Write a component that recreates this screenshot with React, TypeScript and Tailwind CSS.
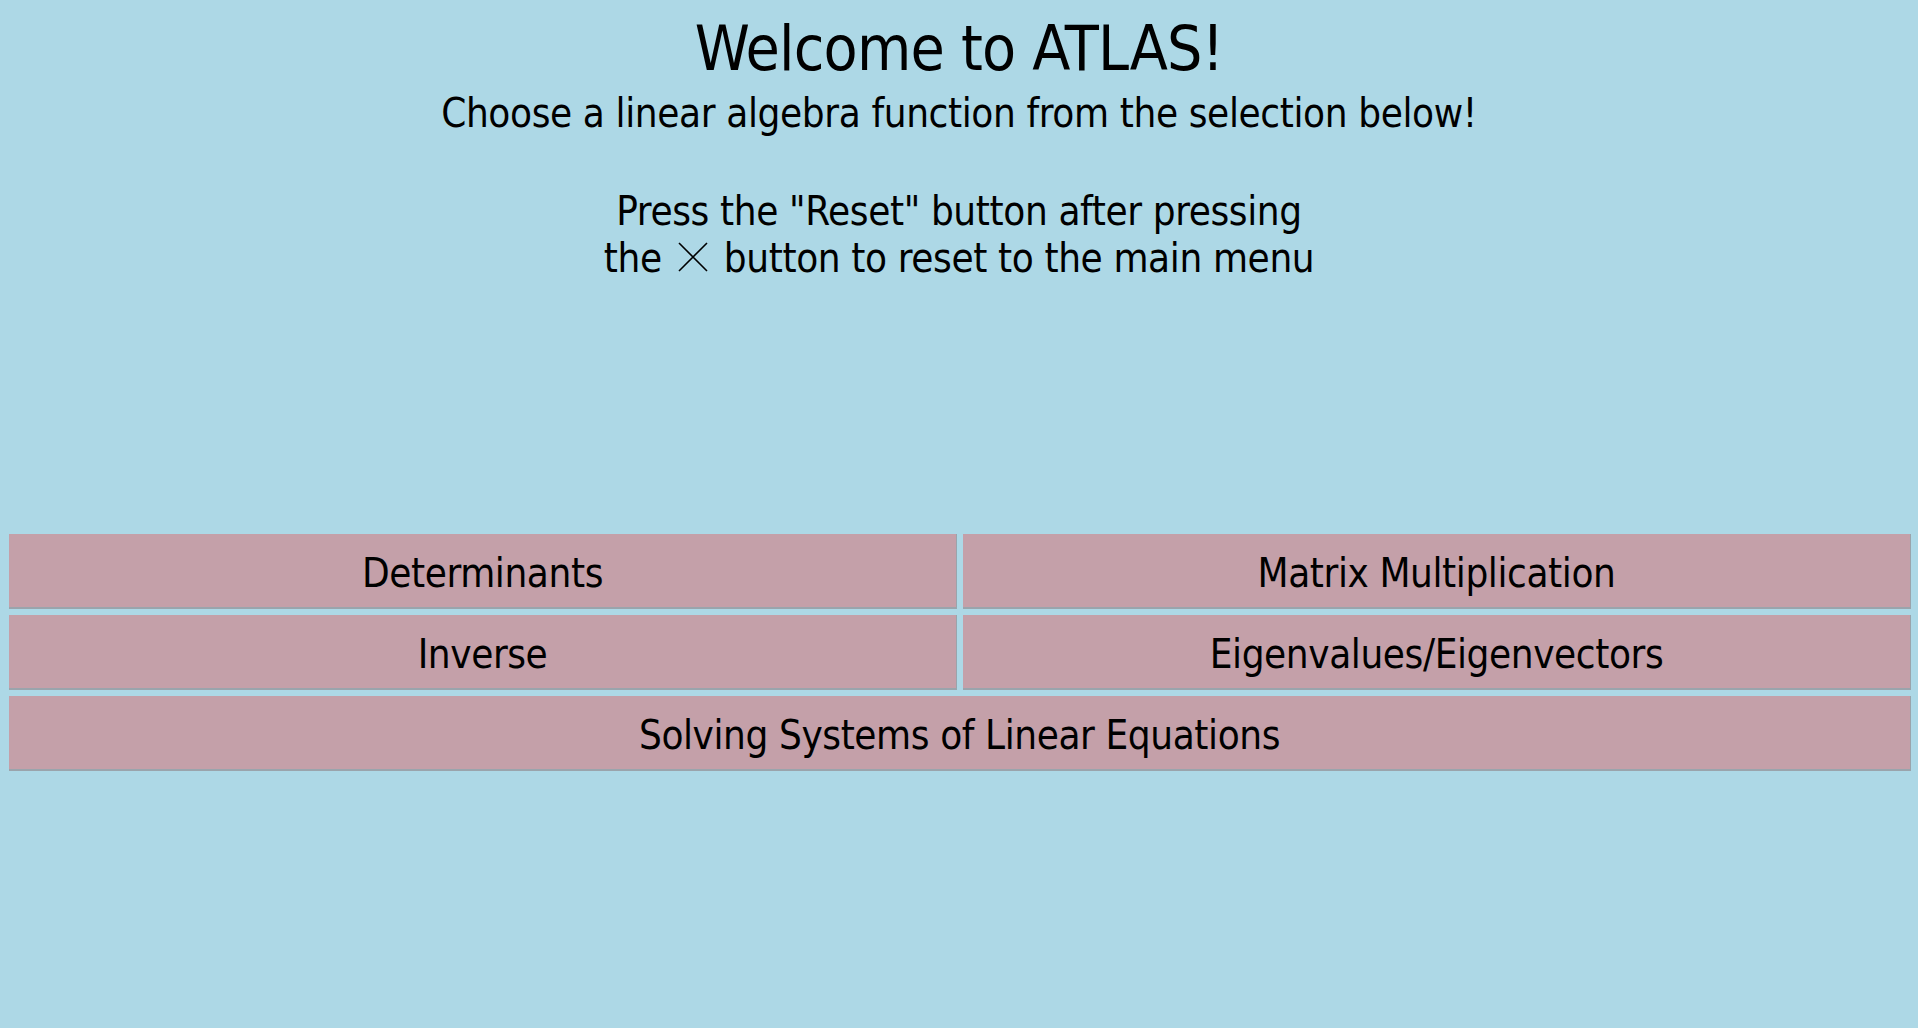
import React from "react";

const font = { fontFamily: '"DejaVu Sans Condensed", "DejaVu Sans", sans-serif' };

function CrossIcon() {
  return (
    <svg
      viewBox="0 0 30 30"
      className="inline-block w-[32px] h-[30px] mx-[4px] align-baseline"
      fill="none"
      stroke="currentColor"
      strokeWidth={1.6}
    >
      <path d="M1 1L29 29M29 1L1 29" />
    </svg>
  );
}

function MenuButton({ label, wide }: { label: string; wide?: boolean }) {
  return (
    <button
      className={`h-[75px] pt-[4px] bg-[#c4a0a9] border-r border-b-2 border-[#9aa4ac] text-[40px] leading-[48px] tracking-[-0.4px] text-black ${
        wide ? "col-span-2" : ""
      }`}
    >
      {label}
    </button>
  );
}

export default function App() {
  return (
    <div className="min-h-[1028px] bg-[#add8e6] text-black" style={font}>
      {/* Header */}
      <div className="pt-[10px] text-center">
        <h1 className="text-[62px] leading-[77px] tracking-[-0.8px]">Welcome to ATLAS!</h1>
        <p className="mt-[2px] text-[40px] leading-[48px] tracking-[-0.37px]">
          Choose a linear algebra function from the selection below!
        </p>
        <p className="mt-[51px] text-[40px] leading-[47px] tracking-[-0.37px]">
          Press the "Reset" button after pressing
          <br />
          the <CrossIcon /> button to reset to the main menu
        </p>
      </div>

      {/* Function selection */}
      <div className="mt-[252px] pl-[9px] pr-[7px] grid grid-cols-2 gap-[6px]">
        <MenuButton label="Determinants" />
        <MenuButton label="Matrix Multiplication" />
        <MenuButton label="Inverse" />
        <MenuButton label="Eigenvalues/Eigenvectors" />
        <MenuButton label="Solving Systems of Linear Equations" wide />
      </div>
    </div>
  );
}
